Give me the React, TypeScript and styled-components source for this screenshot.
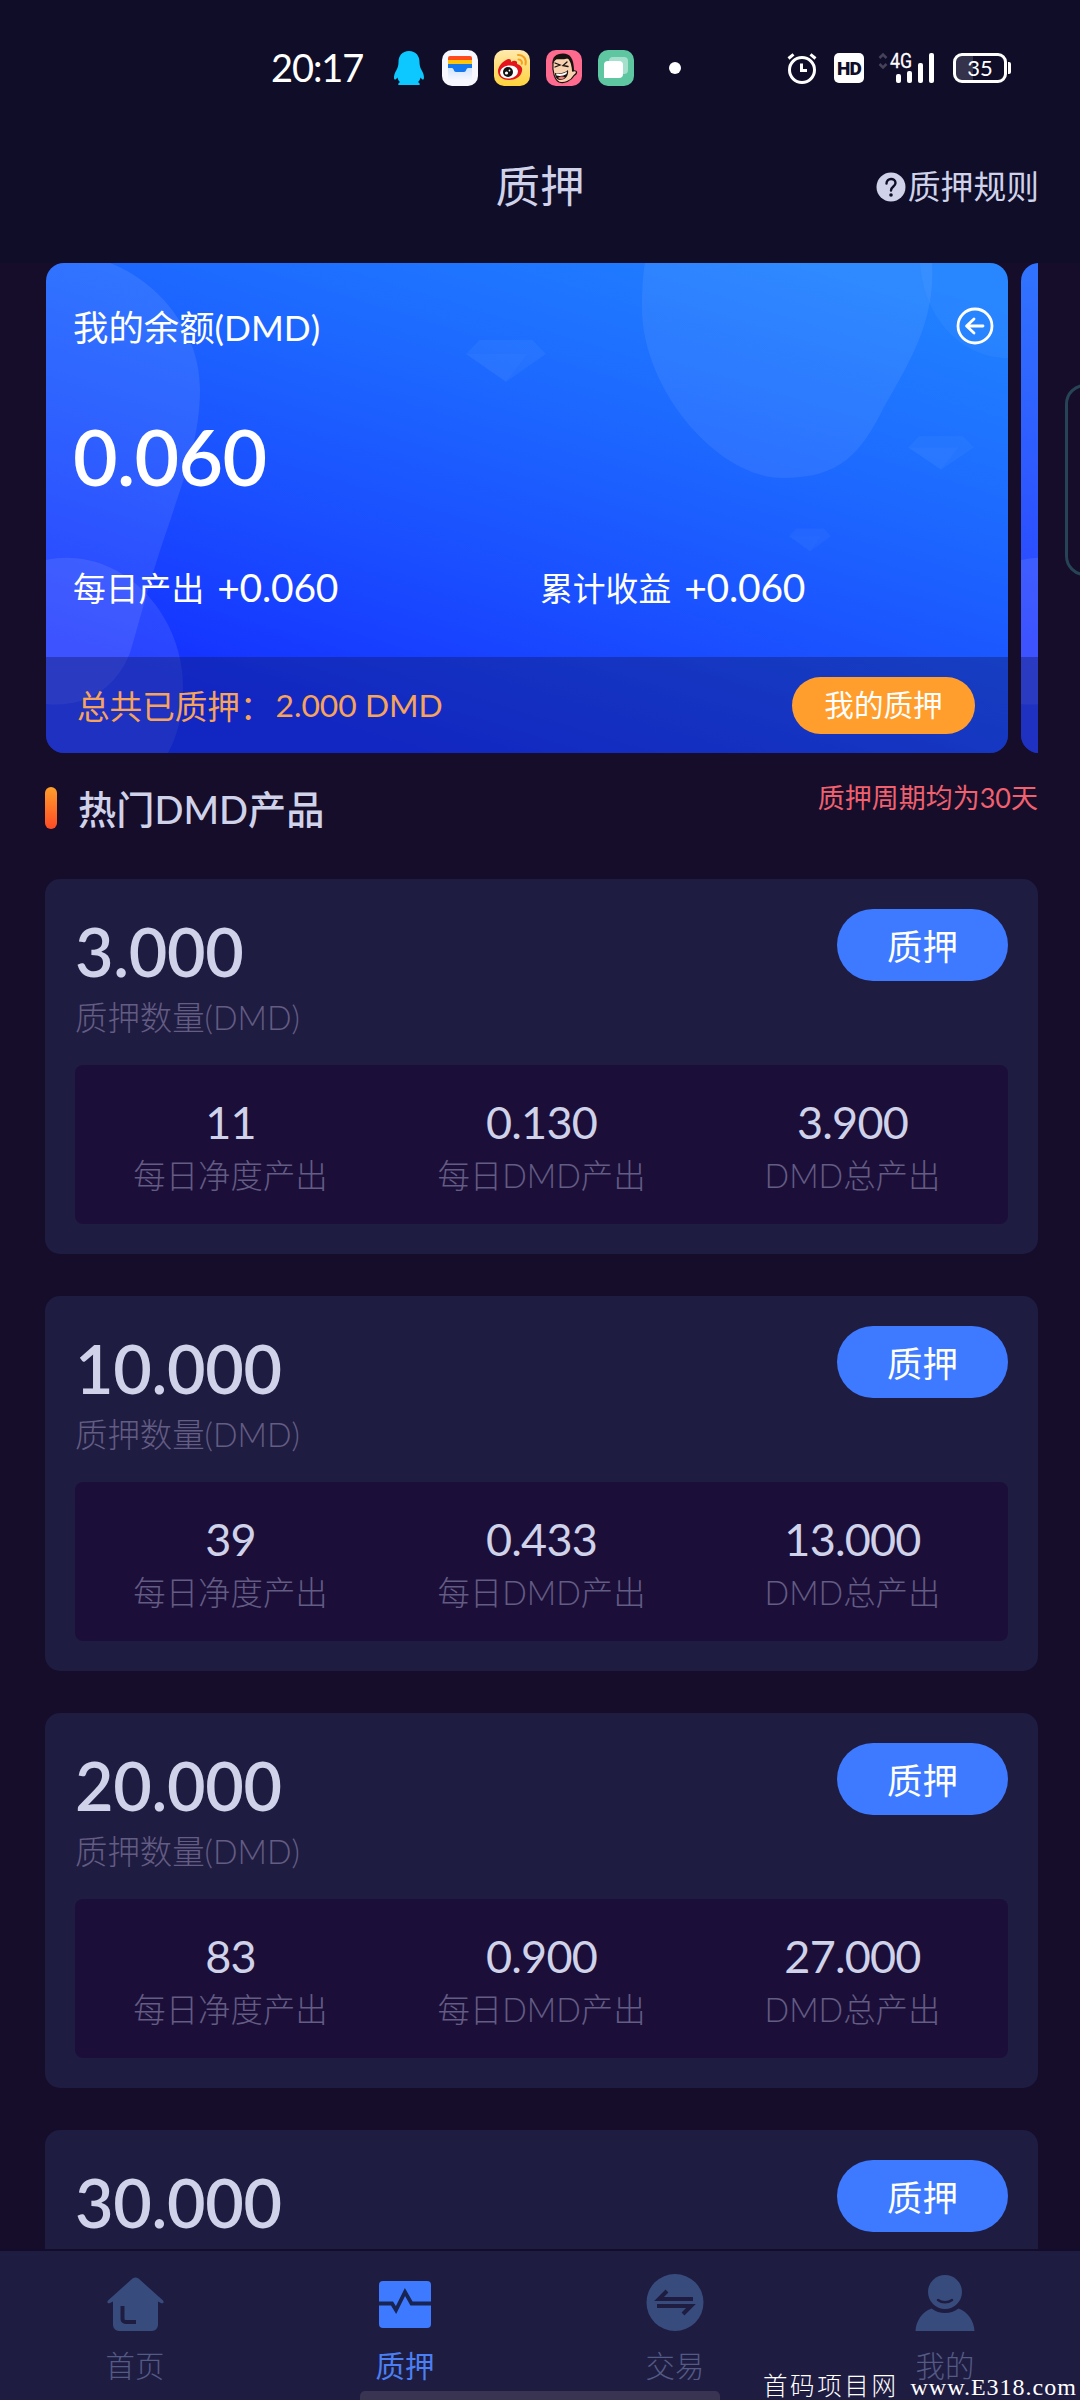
import React from "react";
import styled, { createGlobalStyle } from "styled-components";

const Global = createGlobalStyle`
  * { box-sizing: border-box; }
  html, body { margin: 0; padding: 0; background: #150d2a; }
  body { font-family: Lato, "Noto Sans CJK SC", sans-serif; }
`;

const Screen = styled.div`
  width: 1080px;
  height: 2400px;
  overflow: hidden;
  display: flex;
  flex-direction: column;
  background: #150d2a;
  color: #cfd2e8;
  position: relative;
`;

const Top = styled.div`
  background: #100d28;
  height: 263px;
  flex: none;
`;

const StatusBar = styled.div`
  height: 136px;
  display: flex;
  align-items: center;
  justify-content: space-between;
  padding: 0 73px 0 271px;
  color: #fff;
`;

const StatusGroup = styled.div<{ $gap: number }>`
  display: flex;
  align-items: center;
  gap: ${(p) => p.$gap}px;
`;

const Clock = styled.span`
  font-size: 38px;
  line-height: 40px;
  width: 106px;
  letter-spacing: -1.1px;
  margin-bottom: 3px;
`;

const Dot = styled.i`
  width: 12px;
  height: 12px;
  border-radius: 50%;
  background: #fff;
  margin-left: 19px;
`;

const HdBadge = styled.span`
  width: 30px;
  height: 30px;
  margin: 0 14px 0 17px;
  border-radius: 5px;
  background: #fff;
  color: #100d28;
  font: 900 19px/31px Roboto, sans-serif;
  text-align: center;
  letter-spacing: -0.9px;
`;

const Battery = styled.span`
  width: 54px;
  height: 30px;
  margin-left: 17px;
  border: 3px solid #fff;
  border-radius: 9px;
  background: linear-gradient(90deg, #35334c 35%, #100d28 35%);
  font-size: 22px;
  line-height: 23px;
  text-align: center;
  position: relative;
  &::after {
    content: "";
    position: absolute;
    right: -7px;
    top: 6px;
    width: 3px;
    height: 12px;
    border-radius: 0 2px 2px 0;
    background: #fff;
  }
`;

const Header = styled.header`
  height: 100px;
  display: grid;
  grid-template-columns: 1fr auto 1fr;
  align-items: center;
  padding: 0 41px;
`;

const PageTitle = styled.h1`
  grid-column: 2;
  margin: 0;
  font-size: 44.5px;
  line-height: 60px;
  font-weight: 400;
`;

const Rules = styled.div`
  justify-self: end;
  display: flex;
  align-items: center;
  gap: 2px;
  font-size: 32.8px;
  line-height: 44px;
  padding-top: 2px;
`;

const Carousel = styled.section`
  margin: 0 42px 0 46px;
  height: 489.5px;
  flex: none;
  display: flex;
  gap: 13px;
  overflow: hidden;
`;

const Balance = styled.article`
  flex: none;
  width: 962px;
  height: 489.5px;
  border-radius: 18px;
  overflow: hidden;
  color: #fff;
  display: flex;
  flex-direction: column;
  background: linear-gradient(197deg, #2082ff 6%, #1d69ff 34%, #1a4cff 62%, #1430ff 86%);
  position: relative;
`;

const Art = styled.svg`
  position: absolute;
  inset: 0;
`;

const BalanceBody = styled.div`
  flex: 1;
  display: flex;
  flex-direction: column;
  padding: 41px 14px 0 27px;
  position: relative;
`;

const BalanceHead = styled.div`
  display: flex;
  justify-content: space-between;
  align-items: center;
  font-size: 35.4px;
  line-height: 48px;
`;

const HeadIcon = styled.svg`
  margin-bottom: 5px;
`;

const Amount = styled.div`
  font-size: 77px;
  font-weight: 600;
  line-height: 92px;
  margin-top: 58px;
  letter-spacing: -0.7px;
`;

const Yields = styled.div`
  display: grid;
  grid-template-columns: 467px 1fr;
  margin-top: 61px;
`;

const Yield = styled.div`
  display: flex;
  align-items: center;
  gap: 13px;
  font-size: 32.8px;
  line-height: 48px;
  b { font-weight: 400; font-size: 39px; margin-bottom: 4px; letter-spacing: -0.2px; }
`;

const BalanceFoot = styled.footer`
  height: 96px;
  padding: 0 33px 0 31px;
  display: flex;
  align-items: center;
  justify-content: space-between;
  background: rgba(16, 24, 100, 0.4);
  color: #f6a35c;
  font-size: 32.6px;
  position: relative;
`;

const Staked = styled.span`
  display: flex;
  align-items: center;
  b { font-weight: 400; font-size: 31.8px; margin-left: 3px; }
`;

const MineButton = styled.button`
  width: 183px;
  height: 57px;
  margin-top: 1px;
  border: 0;
  border-radius: 29px;
  padding: 0 0 2px;
  background: #ff9e2d;
  color: #fff;
  font: 400 29.6px/44px "Noto Sans CJK SC", sans-serif;
`;

const SectionHead = styled.div`
  height: 126px;
  flex: none;
  padding: 22px 42px 0 45px;
  display: flex;
  align-items: flex-start;
  justify-content: space-between;
`;

const SectionTitle = styled.h2`
  margin: 0;
  display: flex;
  align-items: center;
  gap: 21px;
  padding-top: 6px;
  font-size: 38.2px;
  line-height: 56px;
  font-weight: 500;
  &::before {
    content: "";
    width: 12px;
    height: 42px;
    border-radius: 6px;
    background: linear-gradient(#ff9f2b, #ff4a26);
    margin-bottom: 1px;
  }
`;

const Period = styled.span`
  color: #f0606e;
  font-size: 27px;
  line-height: 40px;
  padding-top: 3px;
`;

const List = styled.main`
  flex: 1;
  min-height: 0;
  overflow: hidden;
  padding: 0 42px 0 45px;
  display: flex;
  flex-direction: column;
  gap: 42px;
`;

const Product = styled.article`
  flex: none;
  height: 375px;
  border-radius: 15px;
  background: #1f1c42;
  padding: 30px;
`;

const ProductHead = styled.div`
  display: flex;
  justify-content: space-between;
  align-items: flex-start;
  height: 156px;
`;

const Stake = styled.div`
  font-size: 66.500px;
  font-weight: 600;
  line-height: 80px;
  padding-top: 2px;
  margin-bottom: 4px;
  letter-spacing: -0.3px;
`;

const Caption = styled.div`
  color: #635c83;
  font-size: 32.4px;
  line-height: 46px;
  font-weight: 300;
`;

const StakeButton = styled.button`
  width: 171px;
  height: 72px;
  border: 0;
  border-radius: 36px;
  background: #3d7aff;
  color: #fff;
  font: 400 35.4px/50px "Noto Sans CJK SC", sans-serif;
  padding: 1px 0 0;
`;

const Stats = styled.div`
  height: 159px;
  border-radius: 8px;
  background: #1b0f3a;
  display: grid;
  grid-template-columns: repeat(3, 1fr);
  text-align: center;
  padding-top: 29px;
`;

const StatValue = styled.div`
  font-size: 45px;
  line-height: 56px;
  margin-bottom: 3px;
  letter-spacing: -0.8px;
`;

const TabBar = styled.nav`
  height: 151px;
  flex: none;
  border-top: 2px solid #130d2c;
  background: #1f1c42;
  display: grid;
  grid-template-columns: repeat(4, 1fr);
`;

const Tab = styled.div<{ $active?: boolean }>`
  display: flex;
  flex-direction: column;
  align-items: center;
  padding-top: 21px;
  gap: 10px;
  font-size: 29.4px;
  line-height: 44px;
  font-weight: ${(p) => (p.$active ? 400 : 300)};
  color: ${(p) => (p.$active ? "#4a80f4" : "#535a84")};
`;

const HomeIndicator = styled.i`
  position: absolute;
  left: 360px;
  bottom: 0;
  width: 360px;
  height: 9px;
  border-radius: 5px 5px 0 0;
  background: #393452;
`;

const EdgePanel = styled.i`
  position: absolute;
  left: 1065px;
  top: 384px;
  width: 40px;
  height: 192px;
  border: 3px solid #274356;
  border-radius: 20px;
`;

const Watermark = styled.span`
  position: absolute;
  left: 763px;
  top: 2370px;
  height: 30px;
  color: #fff;
  white-space: pre;
  font: 400 24px/30px "Liberation Serif", "Noto Sans CJK SC", serif;
  letter-spacing: 1px;
`;

const Hanzi = styled.span`
  font: 300 24.5px/30px "Noto Sans CJK SC", sans-serif;
  letter-spacing: 2.6px;
  margin-right: 5px;
`;

function AppIcons() {
  return (
    <StatusGroup $gap={16}>
      <svg width="34" height="36" viewBox="-1 0 34 36">
        <path fill="#0cc8ff" d="M16 1C9 1 5.500 6 5.500 12c0 3-.5 5-2 8C1 24 .5 28 1.500 29.500c1 .5 2-.8 3-2 .5 2 1.200 3.500 2.500 4.500-2 1-2.500 3-1 3h20c1.500 0 1-2-1-3 1.300-1 2-2.500 2.500-4.500 1 1.200 2 2.500 3 2 1-1.500.5-5.500-2-9.500-1.500-3-2-5-2-8C26.500 6 23 1 16 1z" />
      </svg>
      <svg width="36" height="36" viewBox="0 0 36 36">
        <defs>
          <linearGradient id="wal" x1="0" y1="0" x2="0" y2="1"><stop offset="0" stopColor="#cfe2fb" /><stop offset="1" stopColor="#f6f7ff" /></linearGradient>
        </defs>
        <rect width="36" height="36" rx="10" fill="#f6f7ff" />
        <path fill="url(#wal)" d="M6 17h24v13H6z" />
        <path fill="#ff4a1c" d="M6 8a2 2 0 0 1 2-2h20a2 2 0 0 1 2 2v3H6z" />
        <path fill="#ffc40c" d="M6 10h24v4H6z" />
        <path fill="#1478f0" d="M6 14h24v4h-4c-2 0-1.500 4-4 4h-8c-2.500 0-2-4-4-4H6z" />
      </svg>
      <svg width="36" height="36" viewBox="0 0 36 36">
        <defs>
          <linearGradient id="wb" x1="0" y1="0" x2="0" y2="1"><stop offset="0" stopColor="#ffe9ad" /><stop offset="1" stopColor="#ffd33c" /></linearGradient>
        </defs>
        <rect width="36" height="36" rx="10" fill="url(#wb)" />
        <path fill="#e3141b" d="M12 10c3-2 5.500-1 5 2 3-2 7-1.500 6 2 3 1 6 3 5 7-1 6-7 9-13 9S4 27 4 21c0-4 4-9 8-11z" />
        <ellipse cx="15" cy="22" rx="9" ry="6.500" fill="#fff" transform="rotate(-8 15 22)" />
        <circle cx="14" cy="22" r="5" fill="#111" />
        <circle cx="12.500" cy="23" r="1.600" fill="#fff" /><circle cx="15.500" cy="20.500" r=".9" fill="#fff" />
        <path fill="none" stroke="#f5a11f" strokeWidth="2" strokeLinecap="round" d="M24 5c5-.5 9 4 7.500 9.500M24.500 9.500c2.500 0 4 2 3.300 4.300" />
      </svg>
      <svg width="36" height="36" viewBox="0 0 36 36">
        <rect width="36" height="36" rx="10" fill="#ff6b8f" />
        <path fill="#f9d3b0" stroke="#17120f" strokeWidth="1.200" d="M7 13c1-7 17-9 19 0l1 8c4-1 5 2 1 4.500C25 31 18 34 13 32 9 30 6 22 7 13z" />
        <path fill="#17120f" d="M6.500 14C6 7 10 3.500 17 3.500S28 8 28 21l-2 .5C26 15 24 11 22 8.500c-4 1-10 1-13 .5z" />
        <path fill="none" stroke="#17120f" strokeWidth="1.300" strokeLinecap="round" d="M9 13l5 2-5 2M21 12l-4 3.500 5 1" />
        <path fill="#17120f" d="M9 23c4 1 10 0 13-3 1 6-3 10-8 10-3 0-5-3-5-7z" />
        <path fill="#fff" d="M10 23.500c4 1 8 0 11-2l-.5 2.500c-3 2-7 2.500-10 1.500z" />
        <path fill="#ef7b7b" d="M12 28c2-2 5-2 7-.5-2 2-5 2.500-7 .5z" />
      </svg>
      <svg width="36" height="36" viewBox="0 0 36 36">
        <rect width="36" height="36" rx="10" fill="#5ec7a2" />
        <rect x="11" y="7" width="19" height="17" rx="4" fill="#a5e0cc" />
        <path fill="#fff" d="M10 11h11a4 4 0 0 1 4 4v9a4 4 0 0 1-4 4H6V15a4 4 0 0 1 4-4z" />
      </svg>
      <Dot />
    </StatusGroup>
  );
}

function BalanceArt() {
  const gem = "M-30-7L-20-21H20L30-7L0 21Z";
  return (
    <Art width="962" height="490" viewBox="0 0 962 490">
      <g fill="#fff">
        <path opacity=".09" d="M0 0H64C115 20 154 70 154 126C154 175 138 215 124 258C105 312 96 350 84 390C70 425 40 445 0 441Z" />
        <path opacity=".09" d="M0 297C70 282 137 345 137 425C137 450 132 472 122 490H0Z" />
        <path opacity=".07" d="M599 0H886C890 60 860 105 838 144C815 190 795 215 736 215C670 214 596 125 596 45C596 25 597 10 599 0Z" />
        <path opacity=".04" d="M874 0C878 55 915 95 962 95V0Z" />
      </g>
      <g fill="#6fb0ff">
        <g transform="translate(460 98) scale(1.330 1)"><path opacity=".11" d={gem} /><path opacity=".06" d="M-30-7H16L0 21Z" /></g>
        <g transform="translate(895 190) scale(1.100 .8)"><path opacity=".09" d={gem} /><path opacity=".05" d="M-30-7H16L0 21Z" /></g>
        <g transform="translate(764 277) scale(.7 .55)"><path opacity=".07" d={gem} /><path opacity=".04" d="M-30-7H16L0 21Z" /></g>
      </g>
    </Art>
  );
}

const products = [
  { stake: "3.000", daily: "11", dmd: "0.130", total: "3.900" },
  { stake: "10.000", daily: "39", dmd: "0.433", total: "13.000" },
  { stake: "20.000", daily: "83", dmd: "0.900", total: "27.000" },
  { stake: "30.000", daily: "", dmd: "", total: "" },
];

export default function App() {
  return (
    <Screen>
      <Global />
      <Top>
        <StatusBar>
          <StatusGroup $gap={15}>
            <Clock>20:17</Clock>
            <AppIcons />
          </StatusGroup>
          <StatusGroup $gap={0}>
            <svg width="30" height="32" viewBox="0 0 30 32" fill="none" stroke="#fff" strokeWidth="3">
              <circle cx="15" cy="18" r="12.500" />
              <path d="M14.500 11.500v7h5.500M1.500 6.500l5-4.200M28.500 6.500l-5-4.200" />
            </svg>
            <HdBadge>HD</HdBadge>
            <svg width="58" height="32" viewBox="0 0 58 32">
              <path d="M1.500 6L5 2.500 8.500 6M1.500 12L5 15.500 8.500 12" fill="none" stroke="#45425a" strokeWidth="2.500" />
              <text x="12" y="15.500" fontFamily="Roboto" fontSize="20" fontWeight="400" fill="#fff" stroke="#fff" strokeWidth=".3" textLength="22" lengthAdjust="spacingAndGlyphs">4G</text>
              <g fill="#fff">
                <rect x="18" y="22" width="5" height="9" rx="2" />
                <rect x="29" y="19" width="5" height="12" rx="2" />
                <rect x="40" y="11" width="5" height="20" rx="2" />
                <rect x="51" y="1" width="5" height="30" rx="2" />
              </g>
            </svg>
            <Battery>35</Battery>
          </StatusGroup>
        </StatusBar>
        <Header>
          <PageTitle>质押</PageTitle>
          <Rules>
            <svg width="30" height="30" viewBox="0 0 30 30">
              <circle cx="15" cy="15" r="14.500" fill="#cfd2e8" />
              <path d="M10.500 11.500c0-6 9-6 9-.5 0 3.500-4.500 3.500-4.500 7.500" fill="none" stroke="#100d28" strokeWidth="2.400" strokeLinecap="round" />
              <circle cx="15" cy="23" r="1.800" fill="#100d28" />
            </svg>
            质押规则
          </Rules>
        </Header>
      </Top>

      <Carousel>
        <Balance>
          <BalanceArt />
          <BalanceBody>
            <BalanceHead>
              我的余额(DMD)
              <HeadIcon width="38" height="38" viewBox="0 0 38 38" fill="none" stroke="#fff" strokeWidth="2.800" strokeLinecap="round" strokeLinejoin="round">
                <circle cx="19" cy="19" r="17" />
                <path d="M27 19H11M18 12l-7.500 7 7.500 7" />
              </HeadIcon>
            </BalanceHead>
            <Amount>0.060</Amount>
            <Yields>
              <Yield>每日产出<b>+0.060</b></Yield>
              <Yield>累计收益<b>+0.060</b></Yield>
            </Yields>
          </BalanceBody>
          <BalanceFoot>
            <Staked>总共已质押：<b>2.000 DMD</b></Staked>
            <MineButton>我的质押</MineButton>
          </BalanceFoot>
        </Balance>
        <Balance>
          <BalanceArt />
          <BalanceBody />
          <BalanceFoot />
        </Balance>
      </Carousel>

      <SectionHead>
        <SectionTitle>热门DMD产品</SectionTitle>
        <Period>质押周期均为30天</Period>
      </SectionHead>

      <List>
        {products.map((p) => (
          <Product key={p.stake}>
            <ProductHead>
              <div>
                <Stake>{p.stake}</Stake>
                {p.daily && <Caption>质押数量(DMD)</Caption>}
              </div>
              <StakeButton>质押</StakeButton>
            </ProductHead>
            {p.daily && (
              <Stats>
                <div><StatValue>{p.daily}</StatValue><Caption>每日净度产出</Caption></div>
                <div><StatValue>{p.dmd}</StatValue><Caption>每日DMD产出</Caption></div>
                <div><StatValue>{p.total}</StatValue><Caption>DMD总产出</Caption></div>
              </Stats>
            )}
          </Product>
        ))}
      </List>

      <TabBar>
        <Tab>
          <svg width="60" height="62" viewBox="0 0 60 62">
            <path fill="#384b7d" d="M27.500 6.500a5 5 0 0 1 6 0L58 28.500c1.500 1.800 0 3.500-2 2.500l-3-1.500V53a6 6 0 0 1-6 6H14a6 6 0 0 1-6-6V29.500L5 31c-2 1-3.500-.7-2-2.500z" />
            <path d="M17.500 34v13a3 3 0 0 0 3 3H31" fill="none" stroke="#1f1c42" strokeWidth="4" />
          </svg>
          首页
        </Tab>
        <Tab $active>
          <svg width="60" height="62" viewBox="0 0 60 62">
            <rect x="4" y="9" width="52" height="47" rx="4" fill="#3d7aff" />
            <path d="M4 31.500h13l4 6.500 9-18 6.500 11.500H56" fill="none" stroke="#182554" strokeWidth="3.800" />
          </svg>
          质押
        </Tab>
        <Tab>
          <svg width="60" height="62" viewBox="0 0 60 62">
            <circle cx="30" cy="30.500" r="28.500" fill="#384b7d" />
            <path d="M48 27H14l8-8M12 34h34l-8 8" fill="none" stroke="#1f1c42" strokeWidth="4" />
          </svg>
          交易
        </Tab>
        <Tab>
          <svg width="62" height="62" viewBox="0 0 62 62">
            <circle cx="31" cy="20" r="17" fill="#384b7d" />
            <path fill="#384b7d" d="M17.500 36.500c8 6 19 6 27 0C54 40 60 49 60.500 59h-59C2 49 8 40 17.500 36.500z" />
            <path d="M24 28c4 3 10 3 14 0" fill="none" stroke="#1f1c42" strokeWidth="2.500" strokeLinecap="round" />
          </svg>
          我的
        </Tab>
      </TabBar>

      <HomeIndicator />
      <EdgePanel />
      <Watermark><Hanzi>首码项目网</Hanzi> www.E318.com</Watermark>
    </Screen>
  );
}
